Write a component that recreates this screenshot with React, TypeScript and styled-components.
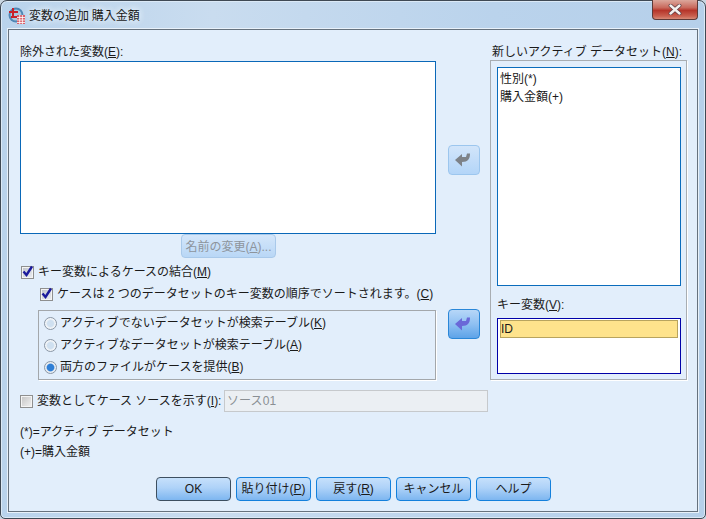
import React from "react";
import styled, { createGlobalStyle } from "styled-components";

const Global = createGlobalStyle`
  html, body { margin: 0; padding: 0; background: #c9d6e2; }
  body { width: 706px; height: 519px; overflow: hidden; }
  * { box-sizing: border-box; }
`;

const Frame = styled.div`
  width: 706px;
  height: 519px;
  display: flex;
  flex-direction: column;
  padding: 0 7px 6px;
  border: 1px solid #3f4954;
  border-radius: 7px 7px 5px 5px;
  box-shadow: inset 0 0 0 1px #dbe9f6;
  background: linear-gradient(90deg, #b9d3ec 0%, #c9dcef 30%, #bad3ec 70%, #b6d0ea 100%);
  font-family: "Liberation Sans", "Noto Sans CJK JP", sans-serif;
  font-size: 12px;
  line-height: 14px;
  color: #1a1a1a;
`;

const TitleBar = styled.div`
  height: 28px;
  flex: none;
  display: flex;
  align-items: flex-start;
  position: relative;
`;

const AppIcon = styled.svg`
  width: 17px;
  height: 17px;
  margin-top: 6px;
  flex: none;
`;

const TitleText = styled.div`
  margin: 6px 0 0 4px;
  font-family: "Noto Sans CJK JP", sans-serif;
  font-size: 12px;
  line-height: 15px;
  white-space: pre;
  text-shadow: 0 0 6px #eef5fc, 0 0 6px #eef5fc;
`;

const CloseButton = styled.div`
  position: absolute;
  top: -1px;
  right: 0;
  width: 46px;
  height: 20px;
  border: 1px solid #5d3a38;
  border-top: none;
  border-radius: 0 0 4px 4px;
  background: linear-gradient(180deg, #dca79c 0%, #c9695c 40%, #b5352a 55%, #c9604f 85%, #d78a78 100%);
  display: flex;
  align-items: center;
  justify-content: center;
`;

const Client = styled.div`
  flex: 1;
  display: flex;
  flex-direction: column;
  background: #e2eefb;
  border: 1px solid #66727e;
  box-shadow: 0 0 0 1px #e8f1fa;
  padding: 15px 0 0 11px;
  min-height: 0;
`;

const Upper = styled.div`
  display: flex;
  height: 335px;
  flex: none;
`;

const LeftCol = styled.div`
  width: 416px;
  display: flex;
  flex-direction: column;
  flex: none;
`;

const FieldLabel = styled.div`
  height: 16px;
  flex: none;
  white-space: nowrap;
  u { text-underline-offset: 1px; }
`;

const ExcludedList = styled.div`
  height: 173px;
  flex: none;
  background: #fff;
  border: 1px solid #0a68b8;
`;

const SmallButtonRow = styled.div`
  height: 25px;
  padding-left: 161px;
  flex: none;
`;

const DisabledButton = styled.div`
  width: 95px;
  height: 24px;
  border: 1px solid #a9c9ea;
  border-radius: 4px;
  background: linear-gradient(180deg, #d4e6fa 0%, #b9d7f6 100%);
  color: #8d949c;
  text-align: center;
  line-height: 24px;
  white-space: nowrap;
`;

const CheckRow = styled.div<{ $indent: number; $top: number }>`
  display: flex;
  align-items: center;
  gap: 4px;
  height: 14px;
  flex: none;
  margin: ${(p) => p.$top}px 0 0 ${(p) => p.$indent}px;
  white-space: nowrap;
`;

const CheckBox = styled.span<{ $disabled?: boolean }>`
  width: 13px;
  height: 13px;
  flex: none;
  display: flex;
  align-items: center;
  justify-content: center;
  border: 1px solid #8e8f8f;
  box-shadow: inset 0 0 0 1px #f4f4f4;
  background: ${(p) =>
    p.$disabled
      ? "linear-gradient(135deg, #c4c4c4, #f2f2f2)"
      : "linear-gradient(135deg, #bcc0c8, #eef0f4)"};
`;

const CheckMark = styled.svg`
  width: 13px;
  height: 13px;
  flex: none;
  margin-top: -1px;
  overflow: visible;
`;

const RadioGroup = styled.div`
  margin: 9px 0 0 18px;
  width: 398px;
  height: 70px;
  flex: none;
  border: 1px solid #a3a7ab;
  box-shadow: 1px 1px 0 #fff;
  padding: 5px 0 0 5px;
  display: flex;
  flex-direction: column;
  gap: 8px;
`;

const RadioRow = styled.div`
  display: flex;
  align-items: center;
  gap: 3px;
  height: 14px;
  white-space: nowrap;
`;

const RadioDot = styled.span<{ $on?: boolean }>`
  width: 13px;
  height: 13px;
  flex: none;
  border-radius: 50%;
  border: 1px solid #8a97a6;
  background: ${(p) =>
    p.$on
      ? "radial-gradient(circle, #2f7fd6 0 3.2px, #5c9be0 3.6px, #e8edf2 4.4px)"
      : "radial-gradient(circle, #cfe0f0 0 3px, #f2f5f8 4.6px)"};
`;

const ArrowCol = styled.div`
  width: 54px;
  flex: none;
  display: flex;
  flex-direction: column;
  padding: 100px 0 0 12px;
`;

const ArrowButton = styled.div<{ $active?: boolean; $top: number }>`
  width: 32px;
  height: 30px;
  margin-top: ${(p) => p.$top}px;
  flex: none;
  border-radius: 4px;
  border: 1px solid ${(p) => (p.$active ? "#2a87d8" : "#9cc6ee")};
  background: ${(p) =>
    p.$active
      ? "linear-gradient(180deg, #b7d7f8 0%, #8fc0f2 50%, #5da3e8 100%)"
      : "linear-gradient(180deg, #d2e5fa 0%, #b3d5f8 100%)"};
  display: flex;
  align-items: center;
  justify-content: center;
`;

const RightCol = styled.div`
  width: 197px;
  flex: none;
  display: flex;
  flex-direction: column;
`;

const RightLabel = styled(FieldLabel)`
  height: 15px;
  padding-left: 2px;
`;

const RightPanel = styled.div`
  width: 197px;
  height: 320px;
  flex: none;
  border: 1px solid #a8adb2;
  box-shadow: 1px 1px 0 #fff;
  padding: 6px 5px 5px 6px;
  display: flex;
  flex-direction: column;
`;

const NewList = styled.div`
  height: 219px;
  flex: none;
  background: #fff;
  border: 1px solid #0a6cbc;
  padding: 2px 2px;
`;

const ListItem = styled.div`
  height: 18px;
  line-height: 18px;
  white-space: nowrap;
`;

const KeyLabel = styled(FieldLabel)`
  margin-top: 12px;
  height: 20px;
  line-height: 14px;
`;

const KeyList = styled.div`
  flex: 1;
  background: #fff;
  border: 1px solid #0000a8;
  padding: 1px 2px;
`;

const KeyItem = styled.div`
  height: 18px;
  background: #fee38c;
  border: 1px solid #b8a45e;
  line-height: 17px;
`;

const SourceRow = styled.div`
  display: flex;
  align-items: center;
  margin: 10px 0 0 0;
  height: 22px;
  flex: none;
`;

const SourceCheck = styled.div`
  display: flex;
  align-items: center;
  gap: 4px;
  width: 204px;
  white-space: nowrap;
  flex: none;
`;

const SourceInput = styled.div`
  width: 264px;
  height: 22px;
  border: 1px solid #c6c9cc;
  background: #ebeff3;
  color: #8a8f94;
  line-height: 20px;
  padding-left: 2px;
  word-spacing: -3px;
`;

const Legend = styled.div`
  margin-top: 13px;
  display: flex;
  flex-direction: column;
  gap: 6px;
  flex: none;
`;

const LegendLine = styled.div`
  height: 14px;
  white-space: nowrap;
`;

const ButtonBar = styled.div`
  display: flex;
  gap: 5px;
  margin: 18px 0 0 136px;
  flex: none;
`;

const DialogButton = styled.div<{ $primary?: boolean }>`
  width: 75px;
  height: 24px;
  border-radius: 4px;
  border: 1px solid ${(p) => (p.$primary ? "#3d4f60" : "#1480dc")};
  background: linear-gradient(180deg, #c6e0fb 0%, #aed2f8 45%, #7db6f0 100%);
  text-align: center;
  line-height: 22px;
  white-space: nowrap;
`;

const Key = ({ c }: { c: string }) => <>(<u>{c}</u>)</>;

const Check = () => (
  <CheckMark viewBox="0 0 13 13">
    <path d="M2.5 6.5 L5.5 10 L11 1.5" fill="none" stroke="#1a1a9c" strokeWidth="2.4" />
  </CheckMark>
);

const Arrow = ({ color }: { color: string }) => (
  <svg width="20" height="16" viewBox="0 0 20 16">
    <path
      d="M1 8 L8 2 L8 5 L12 5 L13 1.5 L16 1.5 C16 7 14 10 8 10 L8 14.5 Z"
      fill={color}
    />
  </svg>
);

export default function App() {
  return (
    <>
      <Global />
      <Frame>
        <TitleBar>
          <AppIcon viewBox="0 0 17 17">
            <circle cx="8" cy="8" r="7.5" fill="#4f86b4" />
            <circle cx="8" cy="8" r="5.5" fill="#a8c8e0" />
            <path d="M1 5 H10 M5 1 V11 M3 10 H9" stroke="#c8202a" strokeWidth="2" fill="none" />
            <rect x="9" y="8" width="8" height="9" fill="#d8606a" />
            <path d="M9 10.5 H17 M9 13 H17 M9 15.5 H17 M11.7 8 V17 M14.4 8 V17" stroke="#fff" strokeWidth="0.8" />
          </AppIcon>
          <TitleText>変数の追加 購入金額</TitleText>
          <CloseButton>
            <svg width="14" height="11" viewBox="0 0 14 11">
              <path
                d="M2.5 1.5 L11.5 9.5 M11.5 1.5 L2.5 9.5"
                stroke="#5a3a40"
                strokeWidth="3.8"
                strokeLinecap="round"
              />
              <path d="M2.5 1.5 L11.5 9.5 M11.5 1.5 L2.5 9.5" stroke="#f4f0ee" strokeWidth="2.4" strokeLinecap="round" />
            </svg>
          </CloseButton>
        </TitleBar>
        <Client>
          <Upper>
            <LeftCol>
              <FieldLabel>
                除外された変数<Key c="E" />:
              </FieldLabel>
              <ExcludedList />
              <SmallButtonRow>
                <DisabledButton>
                  名前の変更(<u>A</u>)...
                </DisabledButton>
              </SmallButtonRow>
              <CheckRow $indent={1} $top={6}>
                <CheckBox>
                  <Check />
                </CheckBox>
                <span>
                  キー変数によるケースの結合<Key c="M" />
                </span>
              </CheckRow>
              <CheckRow $indent={20} $top={8}>
                <CheckBox>
                  <Check />
                </CheckBox>
                <span>
                  ケースは 2 つのデータセットのキー変数の順序でソートされます。<Key c="C" />
                </span>
              </CheckRow>
              <RadioGroup>
                <RadioRow>
                  <RadioDot />
                  <span>
                    アクティブでないデータセットが検索テーブル<Key c="K" />
                  </span>
                </RadioRow>
                <RadioRow>
                  <RadioDot />
                  <span>
                    アクティブなデータセットが検索テーブル<Key c="A" />
                  </span>
                </RadioRow>
                <RadioRow>
                  <RadioDot $on />
                  <span>
                    両方のファイルがケースを提供<Key c="B" />
                  </span>
                </RadioRow>
              </RadioGroup>
            </LeftCol>
            <ArrowCol>
              <ArrowButton $top={0}>
                <Arrow color="#7d8288" />
              </ArrowButton>
              <ArrowButton $active $top={134}>
                <Arrow color="#6a68d8" />
              </ArrowButton>
            </ArrowCol>
            <RightCol>
              <RightLabel>
                新しいアクティブ データセット<Key c="N" />:
              </RightLabel>
              <RightPanel>
                <NewList>
                  <ListItem>性別(*)</ListItem>
                  <ListItem>購入金額(+)</ListItem>
                </NewList>
                <KeyLabel>
                  キー変数<Key c="V" />:
                </KeyLabel>
                <KeyList>
                  <KeyItem>ID</KeyItem>
                </KeyList>
              </RightPanel>
            </RightCol>
          </Upper>
          <SourceRow>
            <SourceCheck>
              <CheckBox $disabled />
              <span>
                変数としてケース ソースを示す(<u>I</u>):
              </span>
            </SourceCheck>
            <SourceInput>ソース 01</SourceInput>
          </SourceRow>
          <Legend>
            <LegendLine>(*)=アクティブ データセット</LegendLine>
            <LegendLine>(+)=購入金額</LegendLine>
          </Legend>
          <ButtonBar>
            <DialogButton $primary>OK</DialogButton>
            <DialogButton>
              貼り付け<Key c="P" />
            </DialogButton>
            <DialogButton>
              戻す<Key c="R" />
            </DialogButton>
            <DialogButton>キャンセル</DialogButton>
            <DialogButton>ヘルプ</DialogButton>
          </ButtonBar>
        </Client>
      </Frame>
    </>
  );
}
